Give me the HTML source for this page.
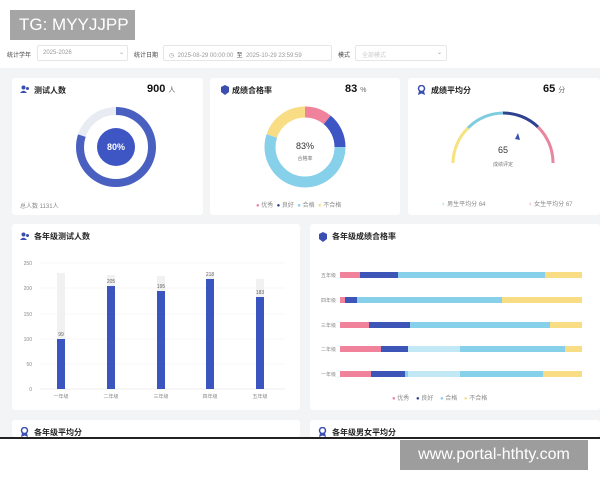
<!DOCTYPE html>
<html><head><meta charset="utf-8"><style>
*{margin:0;padding:0;box-sizing:border-box}
body{width:600px;height:480px;overflow:hidden;background:#fff;font-family:"Liberation Sans","Noto Sans CJK SC",sans-serif;position:relative;color:#333}
.a{position:absolute}
.bg{left:0;top:68px;width:600px;height:369px;background:#f3f4f6}
.card{position:absolute;background:#fff;border-radius:3px}
.t{font-size:8px;font-weight:bold;color:#222;position:absolute}
.s{font-size:6px;color:#888;position:absolute;white-space:nowrap}
.f{font-size:6px;color:#999;position:absolute;white-space:nowrap}
.box{position:absolute;border:1px solid #e6e6e6;background:#fff;height:16px;border-radius:2px}
.big{position:absolute;font-size:11px;font-weight:bold;color:#111}
.big span{font-size:7px;font-weight:normal;color:#666}
</style></head><body>
<div class="a bg"></div>
<div class="card" style="left:12px;top:78px;width:191px;height:137px"></div>
<div class="card" style="left:210px;top:78px;width:190px;height:137px"></div>
<div class="card" style="left:408px;top:78px;width:192px;height:137px"></div>
<div class="card" style="left:12px;top:224px;width:288px;height:186px"></div>
<div class="card" style="left:310px;top:224px;width:290px;height:186px"></div>
<div class="card" style="left:12px;top:420px;width:288px;height:17px"></div>
<div class="card" style="left:310px;top:420px;width:290px;height:17px"></div>

<div class="a" style="left:10px;top:10px;width:125px;height:30px;background:#a5a5a5;color:#fff;font-size:17px;line-height:30px;padding-left:9px">TG: MYYJJPP</div>

<div class="f" style="left:7px;top:50px;color:#444">统计学年</div>
<div class="box" style="left:37px;top:45px;width:91px"></div>
<div class="f" style="left:43px;top:50px">2025-2026</div>
<div class="f" style="left:119px;top:49px">⌄</div>
<div class="f" style="left:134px;top:50px;color:#444">统计日期</div>
<div class="box" style="left:163px;top:45px;width:169px"></div>
<div class="f" style="left:169px;top:50px">◷ &nbsp;2025-08-29 00:00:00 &nbsp;<span style="color:#444">至</span> &nbsp;2025-10-29 23:59:59</div>
<div class="f" style="left:338px;top:50px;color:#444">模式</div>
<div class="box" style="left:355px;top:45px;width:92px"></div>
<div class="f" style="left:362px;top:50px;color:#ccc">全部模式</div>
<div class="f" style="left:437px;top:49px">⌄</div>

<!-- card1 -->
<svg class="a" style="left:20px;top:85px" width="10" height="9"><circle cx="3.5" cy="2.5" r="2" fill="#3b4fb0"/><path d="M0 8 Q3.5 3.5 7 8Z" fill="#3b4fb0"/><circle cx="7.5" cy="3.5" r="1.5" fill="#3b4fb0"/></svg>
<div class="t" style="left:34px;top:85px">测试人数</div>
<div class="big" style="left:147px;top:83px">900 <span>人</span></div>
<svg class="a" style="left:0;top:0" width="600" height="480">
<circle cx="116" cy="147" r="36" fill="none" stroke="#e8ecf2" stroke-width="8"/>
<circle cx="116" cy="147" r="36" fill="none" stroke="#4a60c0" stroke-width="8" stroke-dasharray="181 226" transform="rotate(-90 116 147)"/>
<circle cx="116" cy="147" r="19" fill="#3e55c4"/>
<text x="116" y="150" font-size="9" font-weight="bold" fill="#fff" text-anchor="middle" font-family="Liberation Sans">80%</text>
<g transform="rotate(-90 305 147)" fill="none" stroke-width="11">
<circle cx="305" cy="147" r="35" stroke="#f0829b" stroke-dasharray="24 220"/>
<circle cx="305" cy="147" r="35" stroke="#3e55c4" stroke-dasharray="0 24 31 220"/>
<circle cx="305" cy="147" r="35" stroke="#86d0ea" stroke-dasharray="0 55 121 220"/>
<circle cx="305" cy="147" r="35" stroke="#f8dd84" stroke-dasharray="0 176 44 220"/>
</g>
<text x="305" y="149" font-size="9" fill="#333" text-anchor="middle" font-family="Liberation Sans">83%</text>
<text x="305" y="160" font-size="5" fill="#777" text-anchor="middle" font-family="Noto Sans CJK SC">合格率</text>
<g fill="none" stroke-width="3">
<path d="M453 163 A50 50 0 0 1 468 128" stroke="#f6e27f"/>
<path d="M468 128 A50 50 0 0 1 503 113" stroke="#7fcbe0"/>
<path d="M503 113 A50 50 0 0 1 538 127" stroke="#2f4290"/>
<path d="M538 127 A50 50 0 0 1 553 163" stroke="#e7869c"/>
</g>
<path d="M518 133 L520 140 L515 139Z" fill="#3b4fb0"/>
<text x="503" y="153" font-size="9" fill="#333" text-anchor="middle" font-family="Liberation Sans">65</text>
<text x="503" y="166" font-size="5" fill="#777" text-anchor="middle" font-family="Noto Sans CJK SC">成绩评定</text>
</svg>
<div class="s" style="left:20px;top:201px">总人数 1131人</div>

<svg class="a" style="left:220px;top:85px" width="10" height="10"><path d="M5 0 L9 2 L9 7 L5 10 L1 7 L1 2Z" fill="#3b4fb0"/></svg>
<div class="t" style="left:232px;top:85px">成绩合格率</div>
<div class="big" style="left:345px;top:83px">83 <span>%</span></div>
<div class="s" style="left:256px;top:200px"><span style="color:#f0829b">●</span> 优秀 &nbsp;<span style="color:#2f4290">●</span> 良好 &nbsp;<span style="color:#86d0ea">●</span> 合格 &nbsp;<span style="color:#f8dd84">●</span> 不合格</div>

<svg class="a" style="left:417px;top:85px" width="9" height="10"><circle cx="4.5" cy="3.5" r="3" fill="none" stroke="#3b4fb0" stroke-width="1.5"/><path d="M2 6 L1 10 L4.5 8.5 L8 10 L7 6" fill="#3b4fb0"/></svg>
<div class="t" style="left:431px;top:85px">成绩平均分</div>
<div class="big" style="left:543px;top:83px">65 <span>分</span></div>
<div class="s" style="left:441px;top:199px"><span style="color:#7fcbe0">♀</span> 男生平均分 64</div>
<div class="s" style="left:528px;top:199px"><span style="color:#e7869c">♀</span> 女生平均分 67</div>

<svg class="a" style="left:20px;top:232px" width="10" height="9"><circle cx="3.5" cy="2.5" r="2" fill="#3b4fb0"/><path d="M0 8 Q3.5 3.5 7 8Z" fill="#3b4fb0"/><circle cx="7.5" cy="3.5" r="1.5" fill="#3b4fb0"/></svg>
<div class="t" style="left:34px;top:231px">各年级测试人数</div>
<svg class="a" style="left:0;top:0" width="600" height="480" font-family="Liberation Sans" font-size="5" fill="#888">
<g stroke="#f0f0f0" stroke-width="0.6">
<line x1="40" y1="263" x2="285" y2="263"/><line x1="40" y1="288" x2="285" y2="288"/><line x1="40" y1="314" x2="285" y2="314"/><line x1="40" y1="339" x2="285" y2="339"/><line x1="40" y1="364" x2="285" y2="364"/><line x1="40" y1="389" x2="285" y2="389" stroke="#ddd"/></g>
<g text-anchor="end"><text x="32" y="265">250</text><text x="32" y="290">200</text><text x="32" y="316">150</text><text x="32" y="341">100</text><text x="32" y="366">50</text><text x="32" y="391">0</text></g>
<g fill="#f1f1f1"><rect x="57" y="273" width="8" height="116"/><rect x="107" y="275" width="8" height="114"/><rect x="157" y="276" width="8" height="113"/><rect x="206" y="274" width="8" height="115"/><rect x="256" y="279" width="8" height="110"/></g>
<g fill="#3b55c0"><rect x="57" y="339" width="8" height="50"/><rect x="107" y="286" width="8" height="103"/><rect x="157" y="291" width="8" height="98"/><rect x="206" y="279" width="8" height="110"/><rect x="256" y="297" width="8" height="92"/></g>
<g text-anchor="middle" fill="#666"><text x="61" y="336">99</text><text x="111" y="283">205</text><text x="161" y="288">195</text><text x="210" y="276">218</text><text x="260" y="294">183</text></g>
<g text-anchor="middle" font-family="Noto Sans CJK SC"><text x="61" y="398">一年级</text><text x="111" y="398">二年级</text><text x="161" y="398">三年级</text><text x="210" y="398">四年级</text><text x="260" y="398">五年级</text></g>
<g font-family="Noto Sans CJK SC" text-anchor="end"><text x="336" y="277">五年级</text><text x="336" y="302">四年级</text><text x="336" y="327">三年级</text><text x="336" y="351">二年级</text><text x="336" y="376">一年级</text></g>
<g>
<rect x="340" y="272" width="20" height="6" fill="#f0829b"/><rect x="360" y="272" width="38" height="6" fill="#3e55b8"/><rect x="398" y="272" width="147" height="6" fill="#86d0ea"/><rect x="545" y="272" width="37" height="6" fill="#f8dd84"/>
<rect x="340" y="297" width="5" height="6" fill="#f0829b"/><rect x="345" y="297" width="12" height="6" fill="#3e55b8"/><rect x="357" y="297" width="145" height="6" fill="#86d0ea"/><rect x="502" y="297" width="80" height="6" fill="#f8dd84"/>
<rect x="340" y="322" width="29" height="6" fill="#f0829b"/><rect x="369" y="322" width="41" height="6" fill="#3e55b8"/><rect x="410" y="322" width="140" height="6" fill="#86d0ea"/><rect x="550" y="322" width="32" height="6" fill="#f8dd84"/>
<rect x="340" y="346" width="41" height="6" fill="#f0829b"/><rect x="381" y="346" width="27" height="6" fill="#3e55b8"/><rect x="408" y="346" width="157" height="6" fill="#86d0ea"/><rect x="565" y="346" width="17" height="6" fill="#f8dd84"/>
<rect x="340" y="371" width="31" height="6" fill="#f0829b"/><rect x="371" y="371" width="34" height="6" fill="#3e55b8"/><rect x="405" y="371" width="138" height="6" fill="#86d0ea"/><rect x="543" y="371" width="39" height="6" fill="#f8dd84"/>
</g>
<rect x="408" y="330" width="52" height="52" fill="#fff" opacity="0.5"/>
</svg>
<svg class="a" style="left:318px;top:232px" width="10" height="10"><path d="M5 0 L9 2 L9 7 L5 10 L1 7 L1 2Z" fill="#3b4fb0"/></svg>
<div class="t" style="left:332px;top:231px">各年级成绩合格率</div>
<div class="s" style="left:392px;top:393px"><span style="color:#f0829b">●</span> 优秀 &nbsp;&nbsp;&nbsp;<span style="color:#2f4290">●</span> 良好 &nbsp;&nbsp;&nbsp;<span style="color:#86d0ea">●</span> 合格 &nbsp;&nbsp;&nbsp;<span style="color:#f8dd84">●</span> 不合格</div>

<svg class="a" style="left:20px;top:427px" width="9" height="10"><circle cx="4.5" cy="3.5" r="3" fill="none" stroke="#3b4fb0" stroke-width="1.5"/><path d="M2 6 L1 10 L4.5 8.5 L8 10 L7 6" fill="#3b4fb0"/></svg>
<div class="t" style="left:34px;top:427px">各年级平均分</div>
<svg class="a" style="left:318px;top:427px" width="9" height="10"><circle cx="4.5" cy="3.5" r="3" fill="none" stroke="#3b4fb0" stroke-width="1.5"/><path d="M2 6 L1 10 L4.5 8.5 L8 10 L7 6" fill="#3b4fb0"/></svg>
<div class="t" style="left:332px;top:427px">各年级男女平均分</div>
<div class="a" style="left:0;top:437px;width:600px;height:2px;background:#222"></div>
<div class="a" style="left:400px;top:440px;width:188px;height:30px;background:#9d9d9d;color:#fff;font-size:16px;line-height:30px;text-align:center">www.portal-hthty.com</div>
</body></html>
